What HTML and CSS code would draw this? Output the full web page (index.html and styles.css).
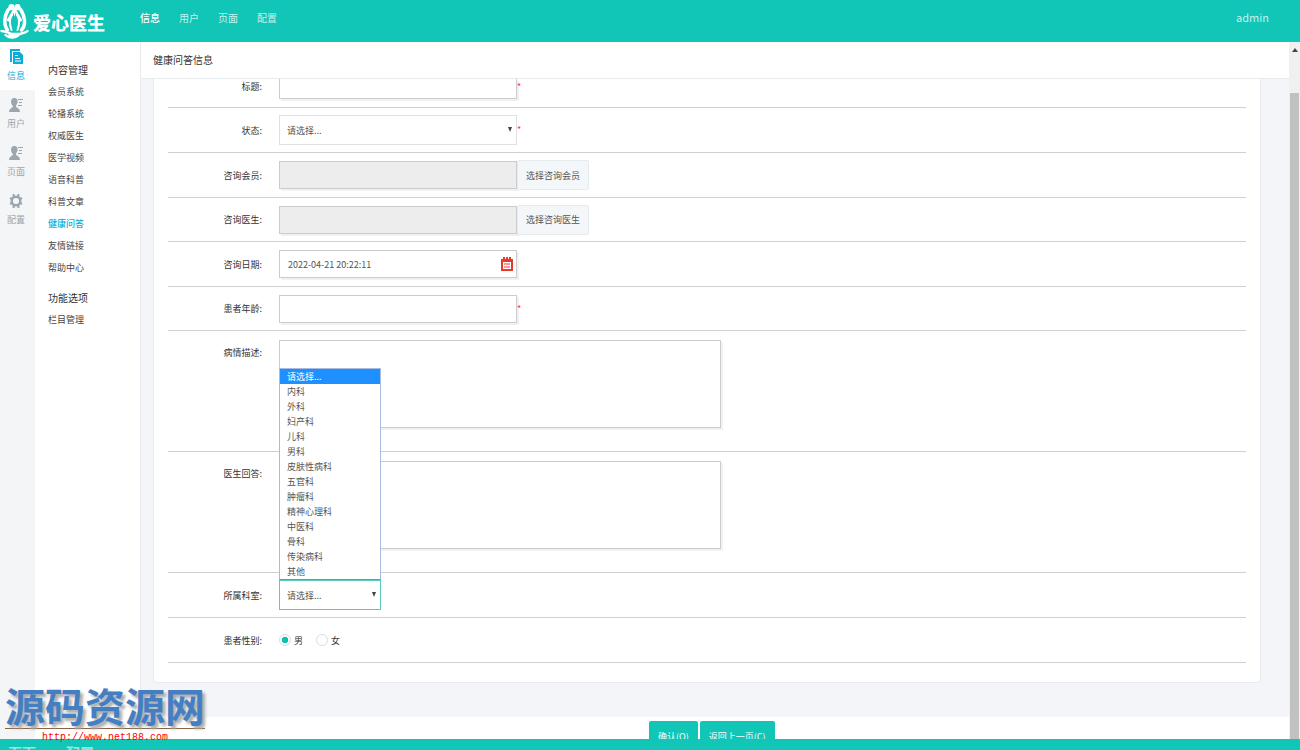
FILE: index.html
```
<!DOCTYPE html>
<html lang="zh-CN">
<head>
<meta charset="utf-8">
<title>健康问答信息</title>
<link rel="stylesheet" href="styles.css">
</head>
<body>
<header class="topbar">
  <a class="logo" href="#">
    <svg class="logo-mark" viewBox="0 0 28 36" fill="none" stroke="#fff" stroke-linecap="round">
      <path d="M7 27C3 22 4 13 7 8C9 4 13 5 14 8C15 5 19 4 21 8C24 13 26 22 21 27" stroke-width="3.500"/>
      <path d="M12 9C9 15 9 22 11 27M16 9C19 15 19 22 17 27" stroke-width="2"/>
      <circle cx="11" cy="4" r="3" fill="#fff" stroke="none"/>
      <circle cx="17" cy="4" r="3" fill="#fff" stroke="none"/>
      <path d="M11 12L8 17M17 12L20 17" stroke-width="3"/>
      <path d="M1 28C5 28 8 30 11 31H16C14 33 11 33 9 32M27 28C25 30 22 30 19 31C16 35 9 36 5 32" stroke-width="2.400"/>
    </svg>
    <span class="logo-text">爱心医生</span>
  </a>
  <nav class="topnav">
    <a class="current" href="#">信息</a><a href="#">用户</a><a href="#">页面</a><a href="#">配置</a>
  </nav>
  <a class="account" href="#">admin</a>
</header>

<div class="workspace">
  <nav class="rail">
    <a class="current" href="#">
      <svg viewBox="0 0 16 16"><path d="M2 0H12V2H4V13H2Z" fill="currentColor"/><path d="M5 3H12L15 6V15H5Z" fill="currentColor"/><path d="M7 6.500H10M7 9.500H12M7 12H13" stroke="#fff" stroke-width="1.200"/></svg>
      <span>信息</span>
    </a>
    <a href="#">
      <svg viewBox="0 0 16 16"><path d="M6 1C9 1 10 3 9.500 5.500C9 7 8 8 8 9.500C8 11 12 11 12 15H1C1 11 5 11 5 9.500C4 8 3.500 7 3 5.500C3 3 4 1 6 1Z" fill="currentColor"/><path d="M10 2.500H15M11 5.500H14M10 8.500H14" stroke="currentColor" stroke-width="1.200"/></svg>
      <span>用户</span>
    </a>
    <a href="#">
      <svg viewBox="0 0 16 16"><path d="M6 1C9 1 10 3 9.500 5.500C9 7 8 8 8 9.500C8 11 12 11 12 15H1C1 11 5 11 5 9.500C4 8 3.500 7 3 5.500C3 3 4 1 6 1Z" fill="currentColor"/><path d="M10 2.500H15M11 5.500H14M10 8.500H14" stroke="currentColor" stroke-width="1.200"/></svg>
      <span>页面</span>
    </a>
    <a href="#">
      <svg viewBox="0 0 16 16" fill="none" stroke="currentColor"><circle cx="8" cy="8" r="4.300" stroke-width="2.400"/><path d="M5.600 1V4M10.400 1V4M5.600 12V15M10.400 12V15M2 5L4 6M2 11L4 10M14 5L12 6M14 11L12 10" stroke-width="2"/></svg>
      <span>配置</span>
    </a>
  </nav>
  <nav class="submenu">
    <h2>内容管理</h2>
    <ul>
      <li><a href="#">会员系统</a></li>
      <li><a href="#">轮播系统</a></li>
      <li><a href="#">权威医生</a></li>
      <li><a href="#">医学视频</a></li>
      <li><a href="#">语音科普</a></li>
      <li><a href="#">科普文章</a></li>
      <li><a class="current" href="#">健康问答</a></li>
      <li><a href="#">友情链接</a></li>
      <li><a href="#">帮助中心</a></li>
    </ul>
    <h2>功能选项</h2>
    <ul>
      <li><a href="#">栏目管理</a></li>
    </ul>
  </nav>

  <main class="main">
    <div class="pane">
      <h1 class="title">健康问答信息</h1>
      <div class="scroll">
        <form class="card" id="qa">
          <div class="row row-cut">
            <label for="subject">标题:</label>
            <input class="field" id="subject" type="text"><span class="req">*</span>
          </div>
          <div class="row">
            <label for="state">状态:</label>
            <div class="pick"><select id="state"><option>请选择...</option></select></div><span class="req">*</span>
          </div>
          <div class="row">
            <label for="member">咨询会员:</label>
            <input class="field" id="member" type="text" disabled><button class="choose" type="button">选择咨询会员</button>
          </div>
          <div class="row row-short">
            <label for="doctor">咨询医生:</label>
            <input class="field" id="doctor" type="text" disabled><button class="choose" type="button">选择咨询医生</button>
          </div>
          <div class="row">
            <label for="date">咨询日期:</label>
            <div class="date">
              <input class="field" id="date" type="text" value="2022-04-21 20:22:11">
              <svg viewBox="0 0 12 14"><path d="M0 2H12V14H0ZM2 0H4V2H2ZM5 0H7V2H5ZM8 0H10V2H8Z" fill="#e8392c"/><path d="M2 5H10V12H2Z" fill="#fff"/><path d="M3 7H9M3 10H9" stroke="#e8392c"/></svg>
            </div>
          </div>
          <div class="row row-short">
            <label for="age">患者年龄:</label>
            <input class="field" id="age" type="text"><span class="req">*</span>
          </div>
          <div class="row row-tall">
            <label for="illness">病情描述:</label>
            <textarea id="illness"></textarea>
          </div>
          <div class="row row-tall">
            <label for="answer">医生回答:</label>
            <textarea id="answer"></textarea>
          </div>
          <div class="row">
            <label for="dept">所属科室:</label>
            <div class="pick pick-open">
              <select id="dept"><option>请选择...</option></select>
              <ul class="options">
                <li class="current">请选择...</li>
                <li>内科</li>
                <li>外科</li>
                <li>妇产科</li>
                <li>儿科</li>
                <li>男科</li>
                <li>皮肤性病科</li>
                <li>五官科</li>
                <li>肿瘤科</li>
                <li>精神心理科</li>
                <li>中医科</li>
                <li>骨科</li>
                <li>传染病科</li>
                <li>其他</li>
              </ul>
            </div>
          </div>
          <div class="row">
            <span class="label">患者性别:</span>
            <label class="radio"><input type="radio" name="sex" checked>男</label>
            <label class="radio"><input type="radio" name="sex">女</label>
          </div>
        </form>
      </div>
      <div class="actions">
        <button type="submit" form="qa">确认(O)</button>
        <button type="button">返回上一页(C)</button>
      </div>
    </div>
    <div class="scrollbar"><div class="thumb"></div></div>
  </main>
</div>

<footer class="bottombar"><span>页面</span><span>配置</span></footer>

<div class="watermark">
  <strong>源码资源网</strong>
  <span>http://www.net188.com</span>
</div>
</body>
</html>
```
FILE: styles.css
```
* { box-sizing: border-box; }
body {
  margin: 0;
  height: 100vh;
  display: flex;
  flex-direction: column;
  overflow: hidden;
  font: 9px/15px "Noto Sans CJK SC", sans-serif;
  color: #444;
  background: #fff;
}
a { color: inherit; text-decoration: none; }
ul { list-style: none; margin: 0; padding: 0; }
h1, h2 { margin: 0; font-size: 10px; font-weight: 400; color: #333; }
input, select, textarea, button { font: inherit; color: #555; margin: 0; }

.topbar {
  flex: none;
  height: 42px;
  display: flex;
  background: #11c5b7;
  color: #fff;
}
.logo { width: 140px; display: flex; align-items: center; gap: 4px; }
.logo-mark { width: 29px; height: 36px; }
.logo-text { font-size: 18px; line-height: 24px; font-weight: 900; padding-top: 2px; }
.topnav { flex: 1; display: flex; gap: 19px; font-size: 10px; line-height: 35px; }
.topnav a { color: #c4f1ed; }
.topnav .current { color: #fff; font-weight: 500; }
.account { padding-right: 31px; font-size: 11px; line-height: 35px; color: #c4f1ed; }

.workspace { flex: 1; min-height: 0; display: flex; }
.rail { width: 35px; flex: none; background: #f3f5f7; color: #9da6ad; }
.rail a {
  height: 48px;
  padding: 7px 3px 0 0;
  display: flex;
  flex-direction: column;
  align-items: center;
  gap: 3px;
}
.rail svg { width: 16px; height: 16px; }
.rail .current { background: #fff; color: #0aaed8; }
.submenu { width: 105px; flex: none; padding: 17px 0 0 13px; }
.submenu h2 { line-height: 22px; }
.submenu li { line-height: 22px; }
.submenu ul { padding-bottom: 8px; }
.submenu .current { color: #0aaed8; font-weight: 500; }

.main { flex: 1; min-width: 0; display: flex; }
.pane { flex: 1; min-width: 0; display: flex; flex-direction: column; border-left: 1px solid #e8ebee; }
.title { padding-left: 12px; line-height: 36px; border-bottom: 1px solid #e8ebee; }
.scroll { flex: 1; min-height: 0; padding: 0 28px 0 12px; background: #f3f5f8; }
.card {
  padding: 0 14px 19px;
  background: #fff;
  border: solid #e8ebee;
  border-width: 0 1px 1px;
  border-radius: 0 0 4px 4px;
}
.row { height: 45px; display: flex; align-items: center; border-bottom: 1px solid #d0d0d0; }
.row > label:first-child, .label { width: 94px; margin-right: 17px; text-align: right; color: #333; }
.row-short { height: 44px; }
.row-cut { height: 29px; align-items: flex-start; overflow: hidden; }
.row-cut .field { border-top: 0; height: 20px; }
.row-tall { height: 121px; align-items: flex-start; padding-top: 9px; }
.row-tall > label:first-child { padding-top: 5px; }
.field {
  width: 238px;
  height: 28px;
  padding: 0 8px;
  border: 1px solid #ccc;
  background: #fff;
  box-shadow: 2px 2px 0 #f1f1f1;
}
.field:disabled { background: #ededed; }
textarea {
  width: 442px;
  height: 88px;
  border: 1px solid #ccc;
  box-shadow: 2px 2px 0 #f1f1f1;
  resize: none;
}
.req { align-self: flex-start; padding-top: 14px; color: #f33; }
.row-cut .req { padding-top: 0; }
.choose {
  height: 30px;
  padding: 0 8px;
  border: 1px solid #e6ebee;
  border-radius: 2px;
  background: #f4f7f9;
}
.date { position: relative; display: flex; }
.date svg { position: absolute; right: 4px; top: 7px; width: 12px; height: 14px; }
.pick { position: relative; width: 238px; }
.pick select {
  display: block;
  width: 100%;
  height: 30px;
  padding: 0 7px;
  appearance: none;
  border: 1px solid #dde1e4;
  border-radius: 0;
  background: #fff;
}
.pick::after {
  content: "";
  position: absolute;
  right: 5px;
  top: 12px;
  border: solid transparent;
  border-width: 5px 2px 0;
  border-top-color: #444;
}
.pick-open { width: 102px; }
.pick-open select { border-color: #5bcabf; }
.options {
  position: absolute;
  left: 0;
  right: 0;
  bottom: 100%;
  border: 1px solid #a9bbe0;
  border-bottom-color: #2fb3bd;
  background: #fff;
  color: #555;
}
.options li { padding-left: 7px; }
.options .current { background: #1e90ff; color: #fff; }
.radio { display: flex; align-items: center; gap: 3px; margin-right: 13px; color: #333; }
.radio input {
  appearance: none;
  width: 12px;
  height: 12px;
  border: 1px solid #d9dee0;
  border-radius: 50%;
  background: #fff;
}
.radio input:checked { background: radial-gradient(circle, #11bfae 0 3px, #fff 3px); }

.actions {
  flex: none;
  height: 22px;
  margin-right: 4px;
  padding: 4px 0 0 508px;
  display: flex;
  align-items: flex-start;
  gap: 2px;
  overflow: hidden;
  background: #fff;
}
.actions button {
  flex: none;
  height: 30px;
  padding: 0 9px;
  border: 0;
  border-radius: 2px;
  background: #11c5b7;
  color: #fff;
}
.scrollbar { width: 11px; flex: none; padding: 51px 1px 0; background: #f0f0f0; position: relative; }
.scrollbar::before {
  content: "";
  position: absolute;
  left: 3px;
  top: 6px;
  border: solid transparent;
  border-width: 0 3px 4px;
  border-bottom-color: #444;
}
.thumb { height: 100%; background: #c1c1c1; }

.bottombar {
  flex: none;
  height: 11px;
  padding: 5px 8px 0;
  display: flex;
  gap: 30px;
  overflow: hidden;
  background: #11c5b7;
  color: #9be6e0;
  font-size: 14px;
  font-weight: 700;
  line-height: 16px;
}
.watermark { position: absolute; left: 5px; bottom: 4px; text-align: center; }
.watermark strong {
  display: block;
  font-size: 40px;
  line-height: 46px;
  color: #447fc4;
  border-bottom: 1px solid #8a6340;
  text-shadow: 3px 3px 3px #aaa;
}
.watermark span {
  display: block;
  font: 10px/17px "Liberation Mono", monospace;
  color: #f00;
}
```
